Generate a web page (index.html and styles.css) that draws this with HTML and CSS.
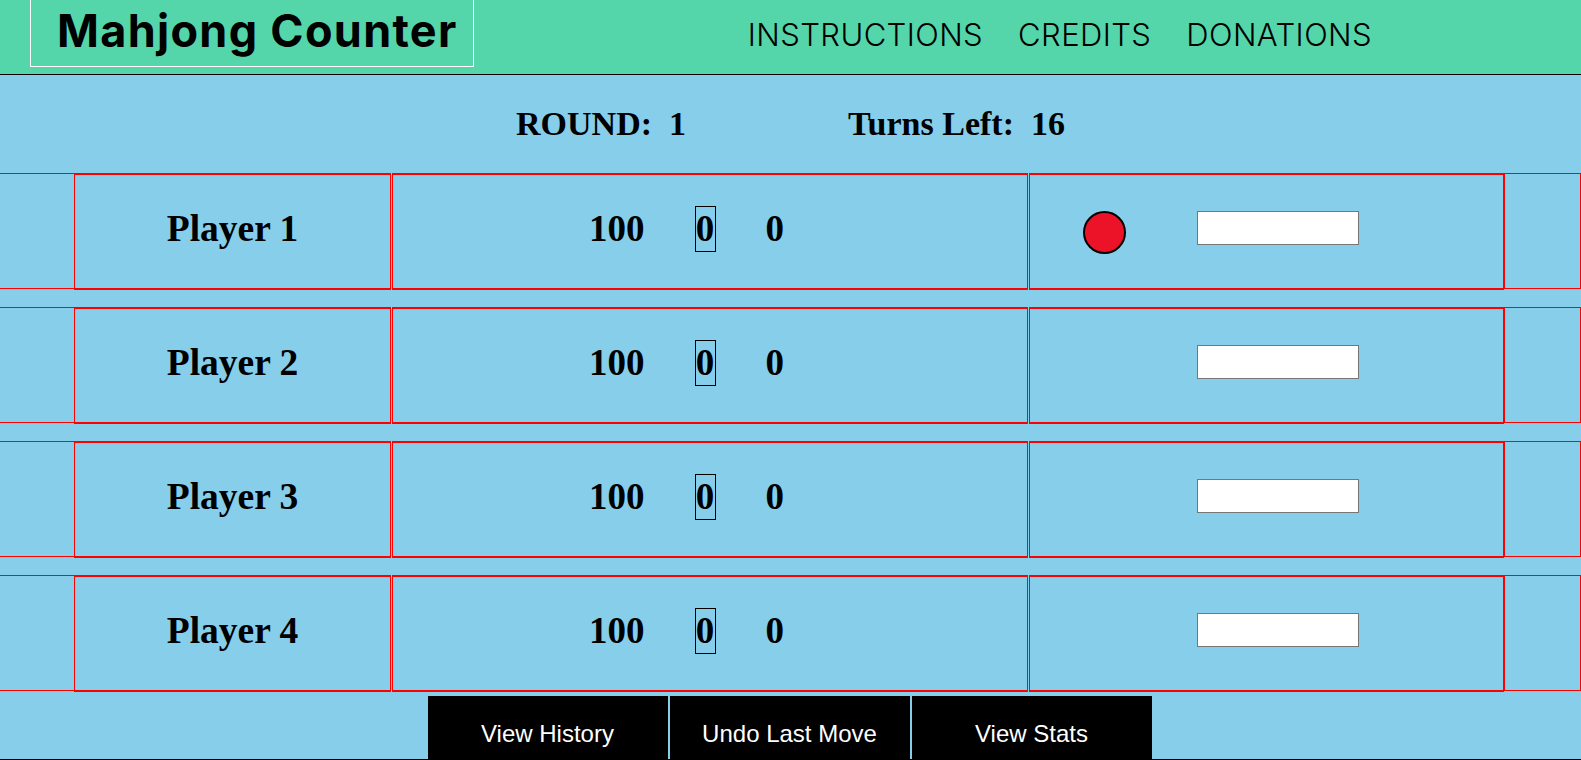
FILE: index.html
```html
<!DOCTYPE html>
<html lang="en">
<head>
<meta charset="utf-8">
<title>Mahjong Counter</title>
<link rel="stylesheet" href="styles.css">
</head>
<body>
<header class="topbar">
  <h1 class="brand">Mahjong Counter</h1>
  <nav class="nav">
    <span class="nav-item">INSTRUCTIONS</span>
    <span class="nav-item">CREDITS</span>
    <span class="nav-item">DONATIONS</span>
  </nav>
</header>

<div class="status">
  <span class="status-item">ROUND:  1</span>
  <span class="status-item">Turns Left:  16</span>
</div>

<div class="row">
  <div class="cell edge-left"></div>
  <div class="cell name">Player 1</div>
  <div class="cell scores"><span>100</span><span class="boxed">0</span><span>0</span></div>
  <div class="cell action"><span class="dot"></span><input class="entry" type="text"></div>
  <div class="cell edge-right"></div>
</div>
<div class="row">
  <div class="cell edge-left"></div>
  <div class="cell name">Player 2</div>
  <div class="cell scores"><span>100</span><span class="boxed">0</span><span>0</span></div>
  <div class="cell action"><span class="dot hidden"></span><input class="entry" type="text"></div>
  <div class="cell edge-right"></div>
</div>
<div class="row">
  <div class="cell edge-left"></div>
  <div class="cell name">Player 3</div>
  <div class="cell scores"><span>100</span><span class="boxed">0</span><span>0</span></div>
  <div class="cell action"><span class="dot hidden"></span><input class="entry" type="text"></div>
  <div class="cell edge-right"></div>
</div>
<div class="row">
  <div class="cell edge-left"></div>
  <div class="cell name">Player 4</div>
  <div class="cell scores"><span>100</span><span class="boxed">0</span><span>0</span></div>
  <div class="cell action"><span class="dot hidden"></span><input class="entry" type="text"></div>
  <div class="cell edge-right"></div>
</div>

<div class="buttons">
  <button class="btn">View History</button>
  <button class="btn">Undo Last Move</button>
  <button class="btn">View Stats</button>
</div>

<footer class="footer"></footer>
</body>
</html>
```

FILE: styles.css
```css
html, body {
  margin: 0;
  padding: 0;
}
body {
  background: #87ceeb;
  font-family: "Liberation Serif", "Times New Roman", serif;
  color: #000;
}

/* header */
.topbar {
  display: flex;
  align-items: flex-start;
  height: 74px;
  background: #54d6aa;
  border-bottom: 1px solid #000;
}
.brand {
  margin: 0 0 0 30px;
  box-sizing: border-box;
  width: 444px;
  height: 67px;
  padding-left: 26px;
  border: 1px solid #fff;
  border-top: none;
  font-family: Inter, "Liberation Sans", sans-serif;
  font-weight: 700;
  font-size: 45px;
  line-height: 61px;
  letter-spacing: 1.3px;
  color: #000;
  white-space: nowrap;
}
.nav {
  display: flex;
  gap: 35px;
  margin-left: auto;
  margin-right: 209px;
  padding-top: 16px;
}
.nav-item {
  font-family: Inter, "Liberation Sans", sans-serif;
  font-weight: 350;
  font-size: 31px;
  line-height: 38px;
  letter-spacing: 0.4px;
  color: #000;
}

/* round status */
.status {
  display: flex;
  justify-content: center;
  gap: 162px;
  margin-top: 29px;
  height: 40px;
}
.status-item {
  font-weight: 700;
  font-size: 34px;
  line-height: 40px;
  white-space: pre;
}

/* player rows */
.row {
  display: flex;
  align-items: flex-start;
  margin-top: 29px;
  height: 117px;
}
.row + .row {
  margin-top: 17px;
}
.cell {
  box-sizing: border-box;
}
.edge-left {
  width: 74px;
  height: 116px;
  border-top: 1px solid #f00;
  border-bottom: 1px solid #f00;
}
.edge-right {
  width: 77px;
  height: 116px;
  border: 1px solid #f00;
}
.name, .scores, .action {
  height: 117px;
  border: 1px solid #f00;
  border-top-width: 2px;
  border-bottom-width: 2px;
}
.name {
  width: 317px;
  text-align: center;
  padding-top: 33px;
  font-weight: 700;
  font-size: 37.5px;
  line-height: 42px;
}
.scores {
  width: 636px;
  margin-left: 1px;
  display: flex;
  align-items: baseline;
  gap: 50px;
  padding-left: 196px;
  padding-top: 31px;
  font-weight: 700;
  font-size: 37px;
  line-height: 42px;
}
.boxed {
  display: inline-block;
  border: 1px solid #000;
  padding: 1px 0;
  width: 19px;
  text-align: center;
}
.action {
  width: 475px;
  margin-left: 1px;
  display: flex;
  align-items: flex-start;
  padding-top: 36px;
  padding-left: 53px;
  gap: 71px;
}
.dot {
  box-sizing: border-box;
  width: 43px;
  height: 43px;
  border-radius: 50%;
  border: 2.5px solid #000;
  background: #ec1227;
  flex: none;
}
.dot.hidden {
  visibility: hidden;
}
.entry {
  box-sizing: border-box;
  width: 162px;
  height: 34px;
  margin: 0;
  border: 1px solid #767676;
  background: #fff;
  padding: 1px 2px;
}

/* buttons */
.buttons {
  display: flex;
  justify-content: center;
  gap: 2px;
  margin-top: 4px;
  padding-right: 2px;
}
.btn {
  box-sizing: border-box;
  width: 240px;
  height: 63px;
  margin: 0;
  border: none;
  background: #000;
  color: #fff;
  font-family: "Liberation Sans", Arial, sans-serif;
  font-size: 24px;
  line-height: 28px;
  padding: 24px 0 11px;
  text-align: center;
}

.footer {
  height: 60px;
  background: #54d6aa;
  border-top: 1px solid #000;
}
```
